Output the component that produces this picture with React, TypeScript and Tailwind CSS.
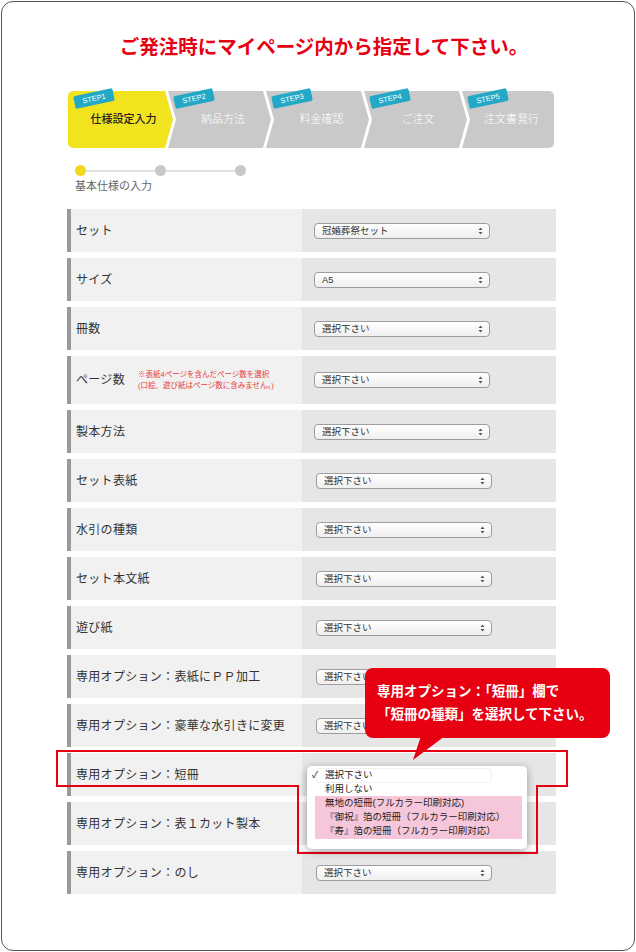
import React from "react";

type Row = { label: string; value?: string; note?: boolean; tall?: boolean };

const rows: Row[] = [
  { label: "セット", value: "冠婚葬祭セット" },
  { label: "サイズ", value: "A5" },
  { label: "冊数" },
  { label: "ページ数", note: true, tall: true },
  { label: "製本方法" },
  { label: "セット表紙" },
  { label: "水引の種類" },
  { label: "セット本文紙" },
  { label: "遊び紙" },
  { label: "専用オプション：表紙にＰＰ加工" },
  { label: "専用オプション：豪華な水引きに変更" },
  { label: "専用オプション：短冊" },
  { label: "専用オプション：表１カット製本" },
  { label: "専用オプション：のし" },
];

type Step = { n: number; label: string; box: string; bg: string; text: string; pad: string };

const steps: Step[] = [
  {
    n: 1,
    label: "仕様設定入力",
    box: "w-[105px]",
    bg: "bg-[#f1e41e] rounded-l-[5px] [clip-path:polygon(0_0,97px_0,105px_50%,97px_100%,0_100%)]",
    text: "text-[#222] font-medium",
    pad: "pl-[6px]",
  },
  {
    n: 2,
    label: "納品方法",
    box: "w-[103px] -ml-[5px]",
    bg: "bg-[#c9c9c9] [clip-path:polygon(0_0,95px_0,103px_50%,95px_100%,0_100%,8px_50%)]",
    text: "text-white font-light",
    pad: "pl-[7px]",
  },
  {
    n: 3,
    label: "料金確認",
    box: "w-[103px] -ml-[5px]",
    bg: "bg-[#c9c9c9] [clip-path:polygon(0_0,95px_0,103px_50%,95px_100%,0_100%,8px_50%)]",
    text: "text-white font-light",
    pad: "pl-[8px]",
  },
  {
    n: 4,
    label: "ご注文",
    box: "w-[103px] -ml-[5px]",
    bg: "bg-[#c9c9c9] [clip-path:polygon(0_0,95px_0,103px_50%,95px_100%,0_100%,8px_50%)]",
    text: "text-white font-light",
    pad: "pl-[5px]",
  },
  {
    n: 5,
    label: "注文書発行",
    box: "w-[92px] -ml-[5px]",
    bg: "bg-[#c9c9c9] rounded-r-[5px] [clip-path:polygon(0_0,100%_0,100%_100%,0_100%,8px_50%)]",
    text: "text-white font-light",
    pad: "pl-[7px]",
  },
];

function Arrows() {
  return (
    <svg width="5" height="8" viewBox="0 0 5 8" className="shrink-0">
      <path d="M2.5 0.5 L4.5 3 H0.5 Z" fill="#555" />
      <path d="M2.5 7.5 L4.5 5 H0.5 Z" fill="#555" />
    </svg>
  );
}

function Select({ value }: { value: string }) {
  return (
    <div className="flex h-[16px] w-[176px] items-center justify-between rounded-[4px] border border-[#9d9d9d] bg-gradient-to-b from-white to-[#efefef] pl-[7px] pr-[6px] text-[9.5px] leading-none text-[#333]">
      <span>{value}</span>
      <Arrows />
    </div>
  );
}

export default function App() {
  return (
    <div className="relative h-[952px] w-[636px] bg-white p-px font-['Liberation_Sans','Noto_Sans_CJK_JP',sans-serif]">
      <div className="h-full rounded-[12px] border border-[#555]">
        {/* Title */}
        <div className="pl-[12px] pt-[31px] text-center text-[19.5px] font-bold leading-[28px] text-[#e60012]">
          ご発注時にマイページ内から指定して下さい。
        </div>

        {/* Step bar */}
        <div className="ml-[66px] mt-[30px] flex h-[57px]">
          {steps.map((s) => (
            <div key={s.n} className={`relative h-full shrink-0 ${s.box}`}>
              <div className={`absolute inset-0 ${s.bg}`} />
              <div
                className={`absolute inset-0 flex items-center justify-center text-[11px] ${s.pad} ${s.text}`}
              >
                {s.label}
              </div>
              <div className="absolute left-[6px] top-[1px] flex h-[13px] w-[40px] -rotate-12 items-center justify-center rounded-[2px] bg-[#23a8c6] text-[7.5px] leading-none text-white">
                STEP{s.n}
              </div>
            </div>
          ))}
        </div>

        {/* Progress */}
        <div className="ml-[72.5px] mt-[17px] flex w-[171px] items-center">
          <div className="h-[11px] w-[11px] rounded-full bg-[#f0d91c]" />
          <div className="h-[2px] flex-1 bg-[#e2e2e2]" />
          <div className="h-[11px] w-[11px] rounded-full bg-[#c8c8c8]" />
          <div className="h-[2px] flex-1 bg-[#e2e2e2]" />
          <div className="h-[11px] w-[11px] rounded-full bg-[#c8c8c8]" />
        </div>
        <div className="ml-[73px] mt-[3px] text-[11px] leading-[14px] text-[#666]">基本仕様の入力</div>

        {/* Rows */}
        <div className="ml-[65px] mt-[16px] flex w-[489px] flex-col gap-[6px]">
          {rows.map((r, i) => (
            <div key={r.label} className={`flex ${r.tall ? "h-[48px]" : "h-[43px]"}`}>
              <div className="flex w-[235px] items-center border-l-[4px] border-[#9a9a9a] bg-[#f1f1f1] pl-[5px]">
                <span className="text-[12px] tracking-[0.3px] text-[#333]">{r.label}</span>
                {r.note && (
                  <div className="ml-[13px] text-[7.5px] leading-[11.5px] text-[#e83b3b]">
                    <div>※表紙4ページを含んだページ数を選択</div>
                    <div>(口絵、遊び紙はページ数に含みません。)</div>
                  </div>
                )}
              </div>
              <div className={`flex flex-1 items-center bg-[#e6e6e6] ${i >= 5 ? "pl-[14px]" : "pl-[12px]"}`}>
                <Select value={r.value ?? "選択下さい"} />
              </div>
            </div>
          ))}
        </div>
      </div>

      {/* Red annotation outline + callout tail */}
      <svg className="pointer-events-none absolute left-0 top-0" width="636" height="952" viewBox="0 0 636 952">
        <path d="M57 751 H567 V786 H537 V853 H298 V786 H57 Z" fill="none" stroke="#e60012" strokeWidth="2" />
        <path d="M421 736 L445 736 L413 760 Z" fill="#e60012" />
      </svg>

      {/* Callout */}
      <div className="absolute left-[365px] top-[668px] flex h-[70px] w-[245px] flex-col justify-center rounded-[8px] bg-[#e60012] pl-[12px] text-[13.5px] font-bold leading-[23px] text-white">
        <div>専用オプション：「短冊」欄で</div>
        <div>「短冊の種類」を選択して下さい。</div>
      </div>

      {/* Open dropdown */}
      <div className="absolute left-[307px] top-[766px] h-[83px] w-[220px] rounded-[5px] bg-white pt-[2px] text-[9.5px] leading-none text-[#222] shadow-[0_2px_8px_rgba(0,0,0,0.35)]">
        <div className="pointer-events-none absolute left-[9px] top-[2px] h-[15px] w-[176px] rounded-[4px] border border-[#f0f0f0]" />
        <div className="relative flex h-[14px] items-center">
          <span className="w-[18px] pl-[5px] text-[9px]">✓</span>
          <span>選択下さい</span>
        </div>
        <div className="flex h-[14px] items-center pl-[18px]">利用しない</div>
        <div className="ml-[8px] mr-[5px] bg-[#f6c7da] pb-[1px]">
          <div className="flex h-[14px] items-center pl-[10px]">無地の短冊(フルカラー印刷対応)</div>
          <div className="flex h-[14px] items-center pl-[10px]">『御祝』箔の短冊（フルカラー印刷対応）</div>
          <div className="flex h-[14px] items-center pl-[10px]">『寿』箔の短冊（フルカラー印刷対応）</div>
        </div>
      </div>
    </div>
  );
}
